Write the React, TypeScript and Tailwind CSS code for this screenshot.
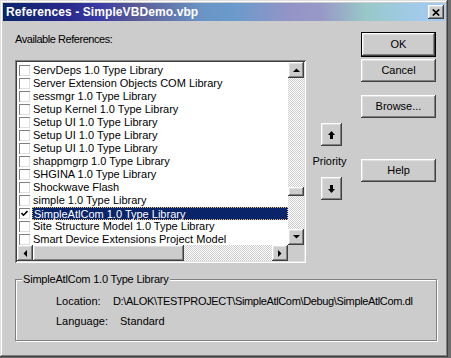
import React from "react";

const raised =
  "bg-[#cccccc] shadow-[inset_-1px_-1px_#404040,inset_1px_1px_#ffffff,inset_-2px_-2px_#808080,inset_2px_2px_#dfdfdf]";

const items: { label: string; checked?: boolean; selected?: boolean }[] = [
  { label: "ServDeps 1.0 Type Library" },
  { label: "Server Extension Objects COM Library" },
  { label: "sessmgr 1.0 Type Library" },
  { label: "Setup Kernel 1.0 Type Library" },
  { label: "Setup UI 1.0 Type Library" },
  { label: "Setup UI 1.0 Type Library" },
  { label: "Setup UI 1.0 Type Library" },
  { label: "shappmgrp 1.0 Type Library" },
  { label: "SHGINA 1.0 Type Library" },
  { label: "Shockwave Flash" },
  { label: "simple 1.0 Type Library" },
  { label: "SimpleAtlCom 1.0 Type Library", checked: true, selected: true },
  { label: "Site Structure Model 1.0 Type Library" },
  { label: "Smart Device Extensions Project Model" },
];

function Tri({ dir }: { dir: "up" | "down" | "left" | "right" }) {
  const pts = {
    up: "0,4 3.5,0.5 7,4",
    down: "0,0 3.5,3.5 7,0",
    left: "4,0 0.5,3.5 4,7",
    right: "0,0 3.5,3.5 0,7",
  }[dir];
  const horiz = dir === "up" || dir === "down";
  return (
    <svg width={horiz ? 7 : 4} height={horiz ? 4 : 7} viewBox={horiz ? "0 0 7 4" : "0 0 4 7"}>
      <polygon points={pts} fill="#000" />
    </svg>
  );
}

function Btn({ children, className = "" }: { children: React.ReactNode; className?: string }) {
  return (
    <div className={`${raised} w-[75px] h-[23px] flex items-center justify-center ${className}`}>
      {children}
    </div>
  );
}

export default function App() {
  return (
    <div
      className="w-[451px] h-[358px] bg-[#6e6e6e] overflow-hidden text-[11px] text-black"
      style={{ fontFamily: '"Liberation Sans", Arial, sans-serif' }}
    >
      <div className="w-[448px] h-[357px] bg-[#cccccc] p-[3px] flex flex-col shadow-[inset_-1px_-1px_#404040,inset_1px_1px_#dfdfdf,inset_-2px_-2px_#808080,inset_2px_2px_#ffffff]">
        {/* Title bar */}
        <div className="h-[18px] flex items-center pl-[3px] pr-[1px] bg-[image:linear-gradient(to_right,#0a246a_0%,#2a2a8c_15%,#3c3ca8_22%,#5a5a96_30%,#6a94c6_45%,#6a9acc_52%,#9494c6_65%,#9898c8_72%,#98c8c8_82%,#a0cae6_92%,#a6caf0_100%)]">
          <span className="text-white font-bold text-[12px] leading-[18px] tracking-[0.1px]">
            References - SimpleVBDemo.vbp
          </span>
          <div className={`${raised} ml-auto w-[16px] h-[14px] flex items-center justify-center`}>
            <svg width="8" height="7" viewBox="0 0 8 7">
              <path d="M0.8 0.5 L7.2 6.5 M7.2 0.5 L0.8 6.5" stroke="#000" strokeWidth="1.7" />
            </svg>
          </div>
        </div>

        {/* Body */}
        <div className="flex flex-row pl-[12px]">
          {/* Left column */}
          <div className="w-[291px] pt-[12px] flex flex-col">
            <div className="h-[13px] leading-[13px] tracking-[-0.45px]">Available References:</div>
            <div className="mt-[14px] w-[291px] h-[203px] p-[2px] bg-white shadow-[inset_1px_1px_#808080,inset_-1px_-1px_#ffffff,inset_2px_2px_#404040,inset_-2px_-2px_#dfdfdf] flex flex-col">
              <div className="flex flex-row flex-1 min-h-0">
                <div className="w-[271px] overflow-hidden pt-[2px] flex flex-col">
                  {items.map((it, i) => (
                    <div key={i} className="h-[13px] shrink-0 flex flex-row items-center">
                      <div className="ml-[2px] w-[11px] h-[11px] bg-white shrink-0 shadow-[inset_1px_1px_#808080,inset_-1px_-1px_#dfdfdf] flex items-center justify-center">
                        {it.checked && (
                          <svg width="7" height="7" viewBox="0 0 7 7">
                            <path d="M0.5 3 L2.5 5.2 L6.5 1" stroke="#000" strokeWidth="1.6" fill="none" />
                          </svg>
                        )}
                      </div>
                      <div
                        className={`ml-[2px] flex-1 h-[13px] leading-[12px] pl-[1px] whitespace-nowrap ${
                          it.selected
                            ? "bg-[#0a246a] text-white border border-dotted border-[#e8c070] pl-0 leading-[11px]"
                            : ""
                        }`}
                      >
                        {it.label}
                      </div>
                    </div>
                  ))}
                </div>
                {/* vertical scrollbar */}
                <div className="w-[16px] flex flex-col bg-[image:repeating-conic-gradient(#ffffff_0%_25%,#cccccc_0%_50%)] bg-[length:2px_2px]">
                  <div className={`${raised} w-[16px] h-[16px] flex items-center justify-center`}>
                    <Tri dir="up" />
                  </div>
                  <div className="flex-1">
                    <div className={`${raised} mt-[109px] w-[16px] h-[9px]`} />
                  </div>
                  <div className={`${raised} w-[16px] h-[16px] flex items-center justify-center`}>
                    <Tri dir="down" />
                  </div>
                </div>
              </div>
              {/* horizontal scrollbar */}
              <div className="h-[16px] flex flex-row">
                <div className="w-[271px] flex flex-row bg-[image:repeating-conic-gradient(#ffffff_0%_25%,#cccccc_0%_50%)] bg-[length:2px_2px]">
                  <div className={`${raised} w-[16px] h-[16px] flex items-center justify-center`}>
                    <Tri dir="left" />
                  </div>
                  <div className={`${raised} w-[151px] h-[16px]`} />
                  <div className="flex-1" />
                  <div className={`${raised} w-[16px] h-[16px] flex items-center justify-center`}>
                    <Tri dir="right" />
                  </div>
                </div>
                <div className="w-[16px] h-[16px] bg-[#cccccc]" />
              </div>
            </div>
          </div>

          {/* Middle column */}
          <div className="w-[50px] flex flex-col items-center pt-[102px]">
            <div className={`${raised} w-[21px] h-[23px] flex items-center justify-center`}>
              <svg width="7" height="8" viewBox="0 0 7 8">
                <polygon points="3.5,0 7,4 5,4 5,8 2,8 2,4 0,4" fill="#000" />
              </svg>
            </div>
            <div className="mt-[9px] h-[13px] leading-[13px] -ml-[3px]">Priority</div>
            <div className={`${raised} mt-[9px] w-[21px] h-[23px] flex items-center justify-center`}>
              <svg width="7" height="8" viewBox="0 0 7 8">
                <polygon points="2,0 5,0 5,4 7,4 3.5,8 0,4 2,4" fill="#000" />
              </svg>
            </div>
          </div>

          {/* Right column */}
          <div className="ml-[5px] w-[75px] pt-[11px] flex flex-col">
            <div className="w-[75px] h-[25px] border border-black">
              <div className={`${raised} w-full h-full flex items-center justify-center`}>OK</div>
            </div>
            <Btn className="mt-[2px]">Cancel</Btn>
            <Btn className="mt-[13px]">Browse...</Btn>
            <Btn className="mt-[41px]">Help</Btn>
          </div>
        </div>

        {/* Group box */}
        <div className="ml-[12px] mt-[16px] w-[422px] h-[62px] relative border border-[#808080] shadow-[inset_1px_1px_#ffffff,1px_1px_#ffffff] pt-[15px] pl-[40px]">
          <span className="absolute -top-[7px] left-[6px] bg-[#cccccc] px-[1px] h-[13px] leading-[13px] tracking-[-0.2px]">
            SimpleAtlCom 1.0 Type Library
          </span>
          <div className="flex flex-row h-[13px] leading-[13px]">
            <span className="w-[57px]">Location:</span>
            <span className="tracking-[-0.35px]">D:\ALOK\TESTPROJECT\SimpleAtlCom\Debug\SimpleAtlCom.dl</span>
          </div>
          <div className="flex flex-row h-[13px] leading-[13px] mt-[7px]">
            <span className="w-[64px]">Language:</span>
            <span>Standard</span>
          </div>
        </div>
      </div>
    </div>
  );
}
